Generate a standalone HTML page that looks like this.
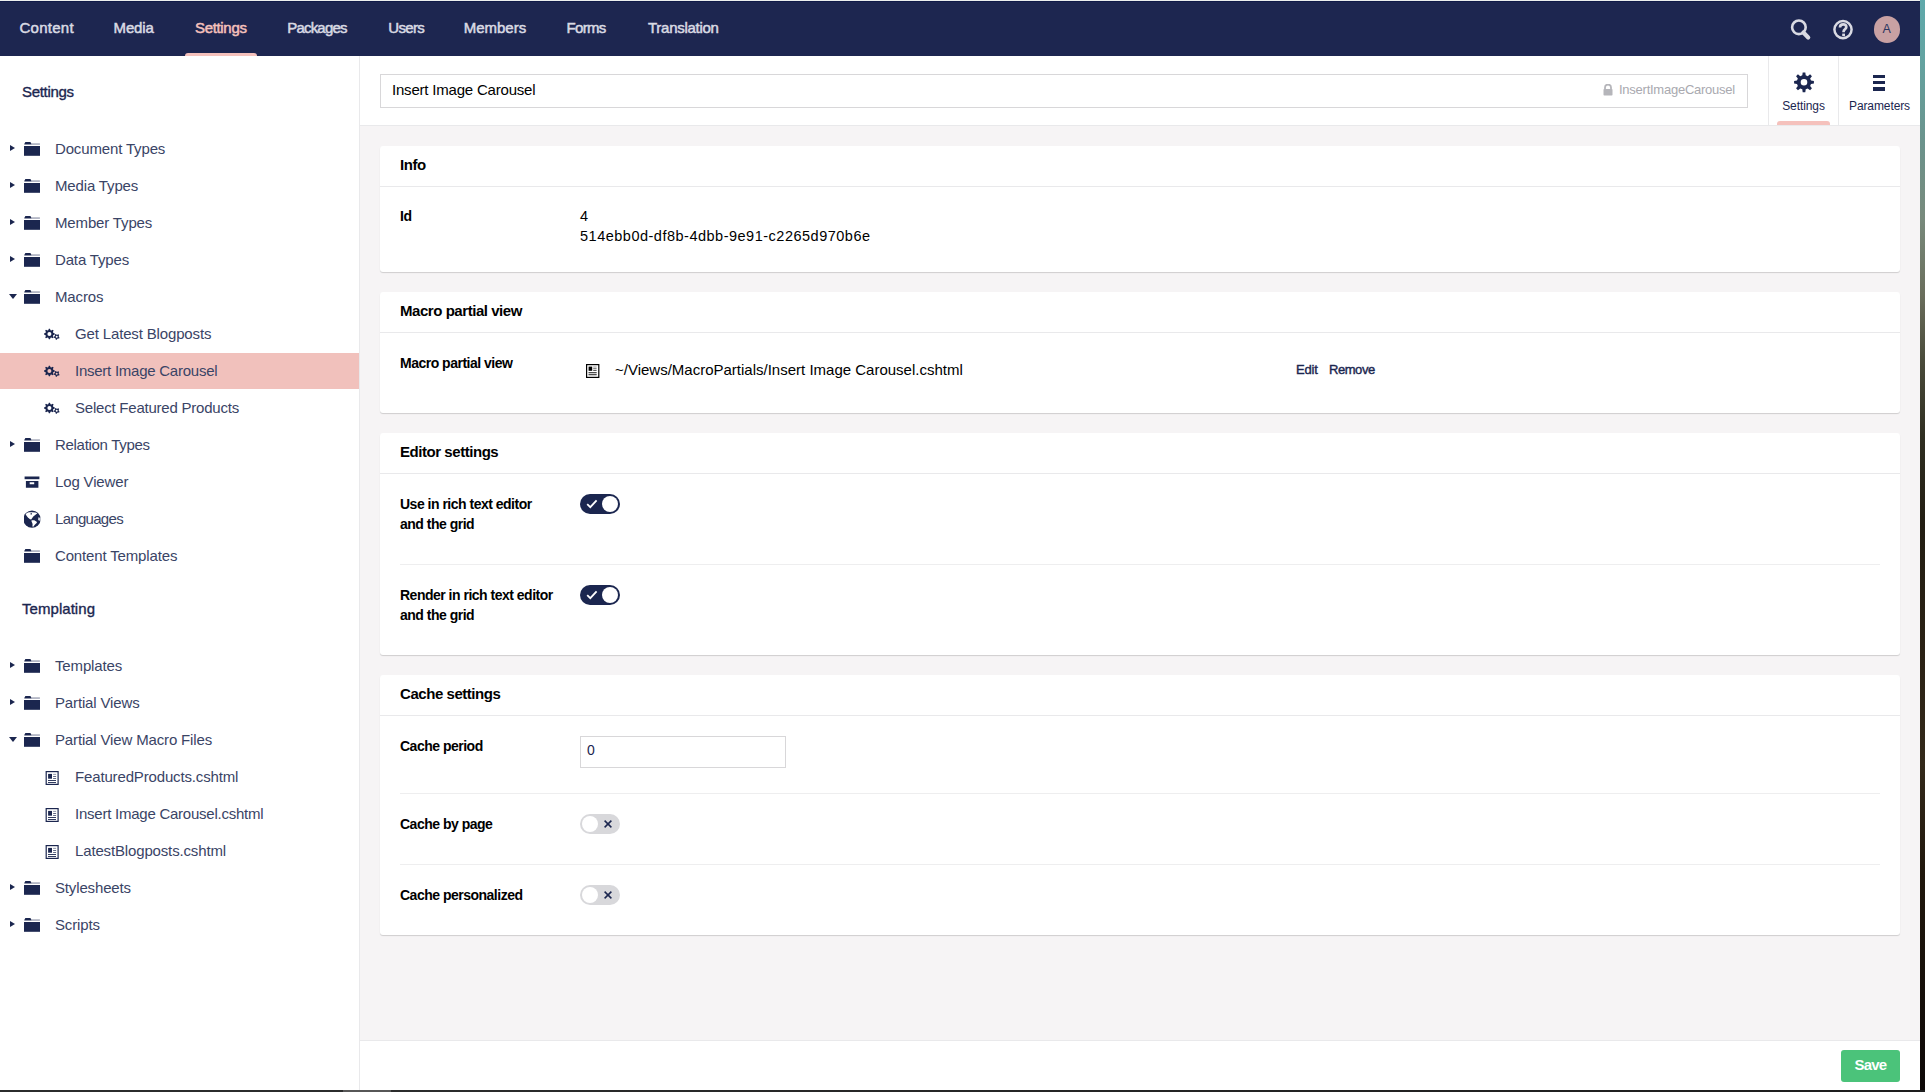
<!DOCTYPE html>
<html><head><meta charset="utf-8">
<style>
*{box-sizing:border-box;margin:0;padding:0}
html,body{width:1925px;height:1092px;overflow:hidden;background:#ecefee;font-family:"Liberation Sans",sans-serif}
.abs{position:absolute}
#desk-r{position:absolute;left:1920px;top:0;width:5px;height:1092px;background:linear-gradient(#5fa9ab 0%,#63a4a2 5%,#6b938c 13%,#788a7c 20%,#6a6e5c 27%,#4a4b3a 33%,#2f2e21 40%,#221d12 48%,#2a2114 60%,#33291a 70%,#20170c 80%,#0d0807 100%)}
#desk-b{position:absolute;left:0;top:1090px;width:1925px;height:2px;background:linear-gradient(90deg,#2b2c2c 0%,#2b2c2c 17.8%,#575757 17.8%,#575757 20.3%,#2b2c2c 20.3%,#1d1d1d 100%)}
#page{position:absolute;left:0;top:1px;width:1920px;height:1089px;background:#fff;overflow:hidden}
/* header */
#hdr{position:absolute;left:0;top:0;width:1920px;height:55px;background:#1d2650;border-top:1px solid #101a48}
.nav{position:absolute;top:16.5px;font-size:15px;color:#d9dae3;font-weight:normal;white-space:nowrap;letter-spacing:-0.1px;-webkit-text-stroke:0.5px #d9dae3}
.nav.act{color:#f5c1bc;-webkit-text-stroke:0.5px #f5c1bc}
#ind{position:absolute;left:185px;top:51px;width:72px;height:4px;background:#f5c1bc;border-radius:3px 3px 0 0}
/* sidebar */
#side{position:absolute;left:0;top:55px;width:360px;height:1034px;background:#fff;border-right:1px solid #e9e9eb}
.th{position:absolute;left:22px;font-size:15px;font-weight:normal;color:#1b264f;white-space:nowrap;letter-spacing:-0.3px;-webkit-text-stroke:0.35px #1b264f}
.ti{position:absolute;left:0;width:359px;height:37px}
.ti .t{position:absolute;top:9px;font-size:15px;color:#3a4466;white-space:nowrap;letter-spacing:-0.15px}
.ti.sel{background:#f1c1bc;height:36px}
.car{position:absolute;top:14px;left:10px;width:0;height:0;border-top:3.5px solid transparent;border-bottom:3.5px solid transparent;border-left:5px solid #1b264f}
.car.dn{left:8.5px;top:15px;border-left:4px solid transparent;border-right:4px solid transparent;border-top:5px solid #1b264f;border-bottom:0}
.ico{position:absolute}
/* main */
#main{position:absolute;left:360px;top:55px;width:1560px;height:1034px;background:#f6f4f5}
#ehdr{position:absolute;left:0;top:0;width:1560px;height:70px;background:#fff;border-bottom:1px solid #e9e9eb}
.panel{position:absolute;left:20px;width:1520px;background:#fff;border-radius:3px;box-shadow:0 1px 1px rgba(0,0,0,.16)}
.ph{position:absolute;left:20px;top:10px;font-size:15px;font-weight:bold;color:#000;white-space:nowrap;letter-spacing:-0.45px}
.pline{position:absolute;left:0;width:1520px;height:1px;background:#e9e9eb}
.lbl{position:absolute;left:20px;font-size:14px;font-weight:bold;color:#000;white-space:nowrap;line-height:20px;letter-spacing:-0.5px}
.val{position:absolute;font-size:15px;color:#000;white-space:nowrap}
.tog{position:absolute;left:200px;width:40px;height:20px;border-radius:10px}
.tog.on{background:#1b264f}
.tog.off{background:#d8d8db}
.knob{position:absolute;top:2px;width:16px;height:16px;border-radius:50%;background:#fff}
.tog.on .knob{left:22px}
.tog.off .knob{left:2px;top:2px;width:16px;height:16px}
.hr{position:absolute;left:20px;width:1480px;height:1px;background:#eeeeef}
#foot{position:absolute;left:0;top:984px;width:1560px;height:50px;background:#fff;border-top:1px solid #e9e9eb}
</style></head>
<body>
<div id="page">
  <div id="hdr">
    <div class="nav" style="left:19.4px;letter-spacing:0.28px">Content</div>
    <div class="nav" style="left:113.6px;letter-spacing:-0.17px">Media</div>
    <div class="nav act" style="left:195.0px;letter-spacing:-0.33px">Settings</div>
    <div class="nav" style="left:287.2px;letter-spacing:-0.80px">Packages</div>
    <div class="nav" style="left:388.2px;letter-spacing:-0.63px">Users</div>
    <div class="nav" style="left:463.8px;letter-spacing:-0.03px">Members</div>
    <div class="nav" style="left:566.4px;letter-spacing:-0.63px">Forms</div>
    <div class="nav" style="left:648.0px;letter-spacing:-0.27px">Translation</div>
    <div id="ind"></div>
    <svg class="abs" style="left:1788px;top:15px" width="26" height="26" viewBox="0 0 26 26"><circle cx="10.9" cy="10.3" r="6.8" fill="none" stroke="#d9dae3" stroke-width="2.6"/><path d="M15.4,15.6 L20.2,20.4" stroke="#d9dae3" stroke-width="4.2" stroke-linecap="round"/></svg>
    <svg class="abs" style="left:1830px;top:15px" width="26" height="26" viewBox="0 0 26 26"><circle cx="13" cy="12.6" r="8.6" fill="none" stroke="#d9dae3" stroke-width="2.5"/><path d="M10,10.4 C10,8.2 11.5,7.4 13.2,7.4 C15.1,7.4 16.3,8.6 16.3,10.1 C16.3,12.2 13.6,12.2 13.6,14.4 V15.2" fill="none" stroke="#d9dae3" stroke-width="2.7"/><rect x="12.2" y="16.6" width="2.8" height="2.6" fill="#d9dae3"/></svg>
    <div class="abs" style="left:1873.5px;top:14px;width:26.5px;height:26.5px;border-radius:50%;background:#c9a1a3"></div>
    <div class="abs" style="left:1873.5px;top:19.5px;width:26.5px;text-align:center;font-size:12.5px;color:#2b3560">A</div>
  </div>
  <div id="side">
<div class="th" style="top:26.5px">Settings</div>
<div class="th" style="top:543.5px;letter-spacing:0.05px">Templating</div>
<div class="ti" style="top:75px"><i class="car"></i><svg class="ico" style="left:24px;top:9px" width="18" height="18" viewBox="0 0 18 18"><path d="M1.3,2.1 h5.2 l0.9,2.1 h-7z" fill="#1b264f"/><rect x="0.3" y="3.5" width="15.6" height="1.1" fill="#1b264f" opacity=".55"/><rect x="0" y="6" width="16" height="9.8" fill="#1b264f"/></svg><span class="t" style="left:55px">Document Types</span></div>
<div class="ti" style="top:112px"><i class="car"></i><svg class="ico" style="left:24px;top:9px" width="18" height="18" viewBox="0 0 18 18"><path d="M1.3,2.1 h5.2 l0.9,2.1 h-7z" fill="#1b264f"/><rect x="0.3" y="3.5" width="15.6" height="1.1" fill="#1b264f" opacity=".55"/><rect x="0" y="6" width="16" height="9.8" fill="#1b264f"/></svg><span class="t" style="left:55px">Media Types</span></div>
<div class="ti" style="top:149px"><i class="car"></i><svg class="ico" style="left:24px;top:9px" width="18" height="18" viewBox="0 0 18 18"><path d="M1.3,2.1 h5.2 l0.9,2.1 h-7z" fill="#1b264f"/><rect x="0.3" y="3.5" width="15.6" height="1.1" fill="#1b264f" opacity=".55"/><rect x="0" y="6" width="16" height="9.8" fill="#1b264f"/></svg><span class="t" style="left:55px">Member Types</span></div>
<div class="ti" style="top:186px"><i class="car"></i><svg class="ico" style="left:24px;top:9px" width="18" height="18" viewBox="0 0 18 18"><path d="M1.3,2.1 h5.2 l0.9,2.1 h-7z" fill="#1b264f"/><rect x="0.3" y="3.5" width="15.6" height="1.1" fill="#1b264f" opacity=".55"/><rect x="0" y="6" width="16" height="9.8" fill="#1b264f"/></svg><span class="t" style="left:55px">Data Types</span></div>
<div class="ti" style="top:223px"><i class="car dn"></i><svg class="ico" style="left:24px;top:9px" width="18" height="18" viewBox="0 0 18 18"><path d="M1.3,2.1 h5.2 l0.9,2.1 h-7z" fill="#1b264f"/><rect x="0.3" y="3.5" width="15.6" height="1.1" fill="#1b264f" opacity=".55"/><rect x="0" y="6" width="16" height="9.8" fill="#1b264f"/></svg><span class="t" style="left:55px">Macros</span></div>
<div class="ti" style="top:260px"><svg class="ico" style="left:44px;top:9px" width="18" height="18" viewBox="0 0 18 18"><g transform="translate(-0.1,3.5)"><path fill-rule="evenodd" fill="#1b264f" d="M10.87,4.97 L10.87,6.03 L9.33,6.66 L9.03,7.39 L9.67,8.93 L8.93,9.67 L7.39,9.03 L6.66,9.33 L6.03,10.87 L4.97,10.87 L4.34,9.33 L3.61,9.03 L2.07,9.67 L1.33,8.93 L1.97,7.39 L1.67,6.66 L0.13,6.03 L0.13,4.97 L1.67,4.34 L1.97,3.61 L1.33,2.07 L2.07,1.33 L3.61,1.97 L4.34,1.67 L4.97,0.13 L6.03,0.13 L6.66,1.67 L7.39,1.97 L8.93,1.33 L9.67,2.07 L9.03,3.61 L9.33,4.34Z M7.50,5.50 A2.0,2.0 0 1 0 3.50,5.50 A2.0,2.0 0 1 0 7.50,5.50Z"/><path fill-rule="evenodd" fill="#1b264f" d="M15.67,9.19 L15.25,10.03 L14.06,9.98 L13.48,10.29 L12.84,11.30 L11.91,11.17 L11.59,10.02 L11.12,9.56 L9.96,9.27 L9.80,8.34 L10.79,7.68 L11.08,7.09 L11.00,5.90 L11.83,5.46 L12.77,6.20 L13.42,6.29 L14.53,5.85 L15.20,6.50 L14.79,7.62 L14.90,8.27Z M13.80,8.30 A1.0,1.0 0 1 0 11.80,8.30 A1.0,1.0 0 1 0 13.80,8.30Z"/></g></svg><span class="t" style="left:75px">Get Latest Blogposts</span></div>
<div class="ti sel" style="top:297px"><svg class="ico" style="left:44px;top:9px" width="18" height="18" viewBox="0 0 18 18"><g transform="translate(-0.1,3.5)"><path fill-rule="evenodd" fill="#1b264f" d="M10.87,4.97 L10.87,6.03 L9.33,6.66 L9.03,7.39 L9.67,8.93 L8.93,9.67 L7.39,9.03 L6.66,9.33 L6.03,10.87 L4.97,10.87 L4.34,9.33 L3.61,9.03 L2.07,9.67 L1.33,8.93 L1.97,7.39 L1.67,6.66 L0.13,6.03 L0.13,4.97 L1.67,4.34 L1.97,3.61 L1.33,2.07 L2.07,1.33 L3.61,1.97 L4.34,1.67 L4.97,0.13 L6.03,0.13 L6.66,1.67 L7.39,1.97 L8.93,1.33 L9.67,2.07 L9.03,3.61 L9.33,4.34Z M7.50,5.50 A2.0,2.0 0 1 0 3.50,5.50 A2.0,2.0 0 1 0 7.50,5.50Z"/><path fill-rule="evenodd" fill="#1b264f" d="M15.67,9.19 L15.25,10.03 L14.06,9.98 L13.48,10.29 L12.84,11.30 L11.91,11.17 L11.59,10.02 L11.12,9.56 L9.96,9.27 L9.80,8.34 L10.79,7.68 L11.08,7.09 L11.00,5.90 L11.83,5.46 L12.77,6.20 L13.42,6.29 L14.53,5.85 L15.20,6.50 L14.79,7.62 L14.90,8.27Z M13.80,8.30 A1.0,1.0 0 1 0 11.80,8.30 A1.0,1.0 0 1 0 13.80,8.30Z"/></g></svg><span class="t" style="left:75px;letter-spacing:-0.25px">Insert Image Carousel</span></div>
<div class="ti" style="top:334px"><svg class="ico" style="left:44px;top:9px" width="18" height="18" viewBox="0 0 18 18"><g transform="translate(-0.1,3.5)"><path fill-rule="evenodd" fill="#1b264f" d="M10.87,4.97 L10.87,6.03 L9.33,6.66 L9.03,7.39 L9.67,8.93 L8.93,9.67 L7.39,9.03 L6.66,9.33 L6.03,10.87 L4.97,10.87 L4.34,9.33 L3.61,9.03 L2.07,9.67 L1.33,8.93 L1.97,7.39 L1.67,6.66 L0.13,6.03 L0.13,4.97 L1.67,4.34 L1.97,3.61 L1.33,2.07 L2.07,1.33 L3.61,1.97 L4.34,1.67 L4.97,0.13 L6.03,0.13 L6.66,1.67 L7.39,1.97 L8.93,1.33 L9.67,2.07 L9.03,3.61 L9.33,4.34Z M7.50,5.50 A2.0,2.0 0 1 0 3.50,5.50 A2.0,2.0 0 1 0 7.50,5.50Z"/><path fill-rule="evenodd" fill="#1b264f" d="M15.67,9.19 L15.25,10.03 L14.06,9.98 L13.48,10.29 L12.84,11.30 L11.91,11.17 L11.59,10.02 L11.12,9.56 L9.96,9.27 L9.80,8.34 L10.79,7.68 L11.08,7.09 L11.00,5.90 L11.83,5.46 L12.77,6.20 L13.42,6.29 L14.53,5.85 L15.20,6.50 L14.79,7.62 L14.90,8.27Z M13.80,8.30 A1.0,1.0 0 1 0 11.80,8.30 A1.0,1.0 0 1 0 13.80,8.30Z"/></g></svg><span class="t" style="left:75px;letter-spacing:-0.22px">Select Featured Products</span></div>
<div class="ti" style="top:371px"><i class="car"></i><svg class="ico" style="left:24px;top:9px" width="18" height="18" viewBox="0 0 18 18"><path d="M1.3,2.1 h5.2 l0.9,2.1 h-7z" fill="#1b264f"/><rect x="0.3" y="3.5" width="15.6" height="1.1" fill="#1b264f" opacity=".55"/><rect x="0" y="6" width="16" height="9.8" fill="#1b264f"/></svg><span class="t" style="left:55px;letter-spacing:-0.3px">Relation Types</span></div>
<div class="ti" style="top:408px"><svg class="ico" style="left:24px;top:9px" width="18" height="18" viewBox="0 0 18 18"><rect x="0.6" y="3.5" width="14.8" height="2.7" fill="#1b264f"/><path fill-rule="evenodd" d="M1.9,8 h12.5 v6.8 h-12.5z M5.7,9.3 h4.5 v1.9 h-4.5z" fill="#1b264f"/></svg><span class="t" style="left:55px">Log Viewer</span></div>
<div class="ti" style="top:445px"><svg class="ico" style="left:24px;top:9px" width="18" height="18" viewBox="0 0 18 18"><circle cx="8" cy="9.2" r="8.6" fill="#1b264f"/><path d="M1.6,4.2 L2.9,2.9 L4.8,2.3 L8.4,2.2 L11.5,2.4 L13.4,3.3 L11.2,5 L9.3,6.5 L7.9,8.4 L7.2,9.6 L6,9.3 L3.9,7.4 L2.7,6Z" fill="#fff"/><path d="M6.5,3.2 L7.9,3.1 L7.6,4.8 L6.6,4.6Z" fill="#1b264f"/><path d="M7.7,10.3 L10.3,10.3 L12.7,11.7 L12.9,12.7 L10.8,14.8 L9.3,16.7 L8.4,16.5 L8.6,14.1 L7.9,12.2 L7.4,11Z" fill="#fff"/><path d="M14.3,7.2 L16.5,7.9 L16.7,9.3 L16.2,10.8 L14.6,10.5 L14.1,9.3Z" fill="#fff" opacity=".8"/></svg><span class="t" style="left:55px;letter-spacing:-0.7px">Languages</span></div>
<div class="ti" style="top:482px"><svg class="ico" style="left:24px;top:9px" width="18" height="18" viewBox="0 0 18 18"><path d="M1.3,2.1 h5.2 l0.9,2.1 h-7z" fill="#1b264f"/><rect x="0.3" y="3.5" width="15.6" height="1.1" fill="#1b264f" opacity=".55"/><rect x="0" y="6" width="16" height="9.8" fill="#1b264f"/></svg><span class="t" style="left:55px">Content Templates</span></div>
<div class="ti" style="top:592px"><i class="car"></i><svg class="ico" style="left:24px;top:9px" width="18" height="18" viewBox="0 0 18 18"><path d="M1.3,2.1 h5.2 l0.9,2.1 h-7z" fill="#1b264f"/><rect x="0.3" y="3.5" width="15.6" height="1.1" fill="#1b264f" opacity=".55"/><rect x="0" y="6" width="16" height="9.8" fill="#1b264f"/></svg><span class="t" style="left:55px">Templates</span></div>
<div class="ti" style="top:629px"><i class="car"></i><svg class="ico" style="left:24px;top:9px" width="18" height="18" viewBox="0 0 18 18"><path d="M1.3,2.1 h5.2 l0.9,2.1 h-7z" fill="#1b264f"/><rect x="0.3" y="3.5" width="15.6" height="1.1" fill="#1b264f" opacity=".55"/><rect x="0" y="6" width="16" height="9.8" fill="#1b264f"/></svg><span class="t" style="left:55px">Partial Views</span></div>
<div class="ti" style="top:666px"><i class="car dn"></i><svg class="ico" style="left:24px;top:9px" width="18" height="18" viewBox="0 0 18 18"><path d="M1.3,2.1 h5.2 l0.9,2.1 h-7z" fill="#1b264f"/><rect x="0.3" y="3.5" width="15.6" height="1.1" fill="#1b264f" opacity=".55"/><rect x="0" y="6" width="16" height="9.8" fill="#1b264f"/></svg><span class="t" style="left:55px">Partial View Macro Files</span></div>
<div class="ti" style="top:703px"><svg class="ico" style="left:44px;top:9px" width="18" height="18" viewBox="0 0 18 18"><rect x="2.2" y="3.6" width="11.9" height="12.8" fill="none" stroke="#1b264f" stroke-width="1.2"/><rect x="4.1" y="5.9" width="3.9" height="4.8" fill="#1b264f"/><rect x="9.1" y="5.9" width="3" height="0.8" fill="#1b264f" opacity=".6"/><rect x="9.1" y="8" width="3" height="0.8" fill="#1b264f" opacity=".85"/><rect x="9.1" y="10" width="3" height="0.8" fill="#1b264f" opacity=".85"/><rect x="4" y="12" width="8" height="0.9" fill="#1b264f"/><rect x="4" y="14.1" width="8" height="0.9" fill="#1b264f"/></svg><span class="t" style="left:75px">FeaturedProducts.cshtml</span></div>
<div class="ti" style="top:740px"><svg class="ico" style="left:44px;top:9px" width="18" height="18" viewBox="0 0 18 18"><rect x="2.2" y="3.6" width="11.9" height="12.8" fill="none" stroke="#1b264f" stroke-width="1.2"/><rect x="4.1" y="5.9" width="3.9" height="4.8" fill="#1b264f"/><rect x="9.1" y="5.9" width="3" height="0.8" fill="#1b264f" opacity=".6"/><rect x="9.1" y="8" width="3" height="0.8" fill="#1b264f" opacity=".85"/><rect x="9.1" y="10" width="3" height="0.8" fill="#1b264f" opacity=".85"/><rect x="4" y="12" width="8" height="0.9" fill="#1b264f"/><rect x="4" y="14.1" width="8" height="0.9" fill="#1b264f"/></svg><span class="t" style="left:75px;letter-spacing:-0.24px">Insert Image Carousel.cshtml</span></div>
<div class="ti" style="top:777px"><svg class="ico" style="left:44px;top:9px" width="18" height="18" viewBox="0 0 18 18"><rect x="2.2" y="3.6" width="11.9" height="12.8" fill="none" stroke="#1b264f" stroke-width="1.2"/><rect x="4.1" y="5.9" width="3.9" height="4.8" fill="#1b264f"/><rect x="9.1" y="5.9" width="3" height="0.8" fill="#1b264f" opacity=".6"/><rect x="9.1" y="8" width="3" height="0.8" fill="#1b264f" opacity=".85"/><rect x="9.1" y="10" width="3" height="0.8" fill="#1b264f" opacity=".85"/><rect x="4" y="12" width="8" height="0.9" fill="#1b264f"/><rect x="4" y="14.1" width="8" height="0.9" fill="#1b264f"/></svg><span class="t" style="left:75px">LatestBlogposts.cshtml</span></div>
<div class="ti" style="top:814px"><i class="car"></i><svg class="ico" style="left:24px;top:9px" width="18" height="18" viewBox="0 0 18 18"><path d="M1.3,2.1 h5.2 l0.9,2.1 h-7z" fill="#1b264f"/><rect x="0.3" y="3.5" width="15.6" height="1.1" fill="#1b264f" opacity=".55"/><rect x="0" y="6" width="16" height="9.8" fill="#1b264f"/></svg><span class="t" style="left:55px">Stylesheets</span></div>
<div class="ti" style="top:851px"><i class="car"></i><svg class="ico" style="left:24px;top:9px" width="18" height="18" viewBox="0 0 18 18"><path d="M1.3,2.1 h5.2 l0.9,2.1 h-7z" fill="#1b264f"/><rect x="0.3" y="3.5" width="15.6" height="1.1" fill="#1b264f" opacity=".55"/><rect x="0" y="6" width="16" height="9.8" fill="#1b264f"/></svg><span class="t" style="left:55px">Scripts</span></div>
</div>
  <div id="main">
    <div id="ehdr">
      <div class="abs" style="left:20px;top:18px;width:1368px;height:34px;border:1px solid #d8d7d9;background:#fff"></div>
      <div class="abs" style="left:32px;top:25px;font-size:15px;color:#000;white-space:nowrap;letter-spacing:-0.2px">Insert Image Carousel</div>
      <svg class="abs" style="left:1243px;top:28px" width="10" height="12" viewBox="0 0 10 12"><path d="M2,5 V3.6 A3,3 0 0 1 8,3.6 V5" fill="none" stroke="#b5b5ba" stroke-width="1.8"/><rect x="0.5" y="5" width="9" height="6.5" rx="0.8" fill="#b5b5ba"/></svg>
      <div class="abs" style="left:1259px;top:26px;font-size:13px;color:#a9a9af;white-space:nowrap;letter-spacing:-0.25px">InsertImageCarousel</div>
      <div class="abs" style="left:1408px;top:0;width:1px;height:69px;background:#e9e9eb"></div>
      <div class="abs" style="left:1478px;top:0;width:1px;height:69px;background:#e9e9eb"></div>
      <svg class="abs" style="left:1434px;top:16px" width="20" height="21" viewBox="0 0 20 21" viewBox="0 0 20 21"><path fill-rule="evenodd" fill="#1b264f" d="M8.30,3.30 L8.68,0.39 L11.32,0.39 L11.70,3.30 L13.74,4.15 L16.07,2.36 L17.94,4.23 L16.15,6.56 L17.00,8.60 L19.91,8.98 L19.91,11.62 L17.00,12.00 L16.15,14.04 L17.94,16.37 L16.07,18.24 L13.74,16.45 L11.70,17.30 L11.32,20.21 L8.68,20.21 L8.30,17.30 L6.26,16.45 L3.93,18.24 L2.06,16.37 L3.85,14.04 L3.00,12.00 L0.09,11.62 L0.09,8.98 L3.00,8.60 L3.85,6.56 L2.06,4.23 L3.93,2.36 L6.26,4.15Z M13.30,10.30 A3.3,3.3 0 1 0 6.70,10.30 A3.3,3.3 0 1 0 13.30,10.30Z"/></svg>
      <div class="abs" style="left:1409px;top:43px;width:69px;text-align:center;font-size:12px;color:#1b264f;letter-spacing:-0.1px">Settings</div>
      <div class="abs" style="left:1417px;top:65px;width:53px;height:4px;background:#f5c1bc;border-radius:3px 3px 0 0"></div>
      <div class="abs" style="left:1513px;top:18.5px;width:12px;height:3.3px;background:#1b264f"></div>
      <div class="abs" style="left:1513px;top:25px;width:12px;height:3.3px;background:#1b264f"></div>
      <div class="abs" style="left:1513px;top:31.3px;width:12px;height:3.3px;background:#1b264f"></div>
      <div class="abs" style="left:1479px;top:43px;width:81px;text-align:center;font-size:12px;color:#1b264f;letter-spacing:-0.1px">Parameters</div>
    </div>

    <div class="panel" style="top:90px;height:126px">
      <div class="ph">Info</div>
      <div class="pline" style="top:40px"></div>
      <div class="lbl" style="top:60px">Id</div>
      <div class="val" style="left:200px;top:60px;line-height:20px;font-size:14.5px;letter-spacing:0.5px">4<br>514ebb0d-df8b-4dbb-9e91-c2265d970b6e</div>
    </div>

    <div class="panel" style="top:236px;height:121px">
      <div class="ph">Macro partial view</div>
      <div class="pline" style="top:40px"></div>
      <div class="lbl" style="top:61px">Macro partial view</div>
      <svg class="abs" style="left:206px;top:72px" width="14" height="14" viewBox="0 0 14 14"><rect x="0.6" y="0.6" width="12.2" height="12.8" fill="none" stroke="#000" stroke-width="1.2"/><rect x="2.6" y="2.6" width="3.6" height="4.2" fill="#000"/><rect x="7.2" y="2.6" width="3.4" height="0.8" fill="#000" opacity=".5"/><rect x="7.2" y="4.4" width="3.4" height="0.8" fill="#000" opacity=".8"/><rect x="7.2" y="6.1" width="3.4" height="0.8" fill="#000" opacity=".8"/><rect x="2.5" y="8.3" width="8.2" height="0.9" fill="#000"/><rect x="2.5" y="10.3" width="8.2" height="0.9" fill="#000"/></svg>
      <div class="val" style="left:235px;top:69px">~/Views/MacroPartials/Insert Image Carousel.cshtml</div>
      <div class="abs" style="left:916px;top:70px;font-size:13px;color:#1b264f;white-space:nowrap;letter-spacing:-0.2px;-webkit-text-stroke:0.4px #1b264f">Edit</div>
      <div class="abs" style="left:949px;top:70px;font-size:13px;color:#1b264f;white-space:nowrap;letter-spacing:-0.45px;-webkit-text-stroke:0.4px #1b264f">Remove</div>
    </div>

    <div class="panel" style="top:377px;height:222px">
      <div class="ph">Editor settings</div>
      <div class="pline" style="top:40px"></div>
      <div class="lbl" style="top:61px">Use in rich text editor<br>and the grid</div>
      <div class="tog on" style="top:61px"><svg class="abs" style="left:6px;top:5px" width="12" height="10" viewBox="0 0 12 10"><path d="M1.2,5.2 L4.3,8.2 L10.6,1.4" fill="none" stroke="#fff" stroke-width="1.8"/></svg><div class="knob"></div></div>
      <div class="hr" style="top:131px"></div>
      <div class="lbl" style="top:152px">Render in rich text editor<br>and the grid</div>
      <div class="tog on" style="top:152px"><svg class="abs" style="left:6px;top:5px" width="12" height="10" viewBox="0 0 12 10"><path d="M1.2,5.2 L4.3,8.2 L10.6,1.4" fill="none" stroke="#fff" stroke-width="1.8"/></svg><div class="knob"></div></div>
    </div>

    <div class="panel" style="top:619px;height:260px">
      <div class="ph">Cache settings</div>
      <div class="pline" style="top:40px"></div>
      <div class="lbl" style="top:61px">Cache period</div>
      <div class="abs" style="left:200px;top:61px;width:206px;height:32px;border:1px solid #d8d7d9;background:#fff"></div>
      <div class="abs" style="left:207px;top:67px;font-size:14px;color:#1b264f">0</div>
      <div class="hr" style="top:118px"></div>
      <div class="lbl" style="top:139px">Cache by page</div>
      <div class="tog off" style="top:139px"><div class="knob"></div><svg class="abs" style="left:24px;top:6px" width="8" height="8" viewBox="0 0 8 8"><path d="M0.6,0.6 L7.4,7.4 M7.4,0.6 L0.6,7.4" stroke="#1b264f" stroke-width="1.5"/></svg></div>
      <div class="hr" style="top:189px"></div>
      <div class="lbl" style="top:210px">Cache personalized</div>
      <div class="tog off" style="top:210px"><div class="knob"></div><svg class="abs" style="left:24px;top:6px" width="8" height="8" viewBox="0 0 8 8"><path d="M0.6,0.6 L7.4,7.4 M7.4,0.6 L0.6,7.4" stroke="#1b264f" stroke-width="1.5"/></svg></div>
    </div>

    <div id="foot">
      <div class="abs" style="left:1481px;top:9px;width:59px;height:32px;background:#4bc37a;border-radius:3px"></div>
      <div class="abs" style="left:1481px;top:14.5px;width:59px;text-align:center;font-size:15px;font-weight:bold;color:#fff;letter-spacing:-0.8px">Save</div>
    </div>
  </div>
</div>
<div id="desk-r"></div>
<div id="desk-b"></div>
</body></html>
